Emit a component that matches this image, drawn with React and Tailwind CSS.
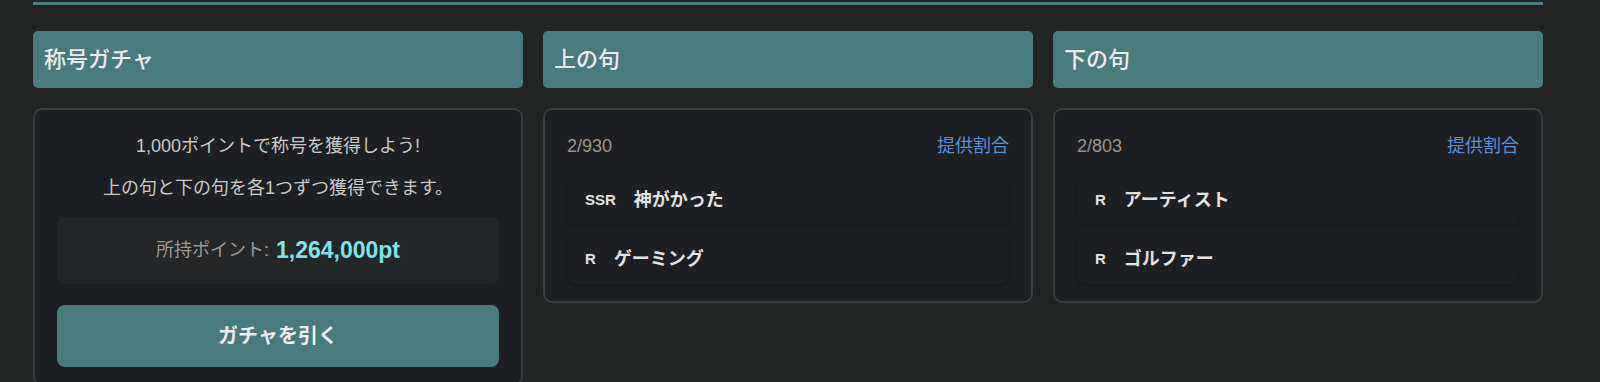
const font = "font-['Liberation_Sans','Noto_Sans_CJK_JP',sans-serif]";

function Header({ title }) {
  return (
    <div className="h-[57px] rounded-[5px] bg-[#497b7d] flex items-center px-[11px]">
      <h2 className="text-[22px] font-medium text-[#ececec]">{title}</h2>
    </div>
  );
}

function Card({ children }) {
  return (
    <div className="mt-5 rounded-[9px] border-2 border-[#3b3c3f] bg-[#1e1f22] px-[22px] pt-[23px] pb-[17px]">
      {children}
    </div>
  );
}

function PoolCard({ count, items }) {
  return (
    <Card>
      <div className="flex justify-between items-center text-[18px] leading-[27px]">
        <span className="text-[#9a958e]">{count}</span>
        <span className="text-[#5a8fd6]">提供割合</span>
      </div>
      <div className="mt-4 flex flex-col gap-[10px]">
        {items.map((it) => (
          <div
            key={it.name}
            className="h-[49px] flex items-center gap-[18px] pl-[18px] rounded-lg bg-[#1e1f22] shadow-[0_1px_3px_rgba(0,0,0,0.25)]"
          >
            <span className="text-[15px] font-bold text-[#e2e2e2]">{it.rank}</span>
            <span className="text-[18px] font-bold text-[#e2e2e2]">{it.name}</span>
          </div>
        ))}
      </div>
    </Card>
  );
}

export default function App() {
  return (
    <div className={`min-h-screen bg-[#222423] ${font}`}>
      <div className="ml-[33px] w-[1510px] pt-[2px]">
        <div className="h-[3px] bg-[#4a7e80]" />

        <div className="grid grid-cols-3 gap-5 mt-[26px]">
          <div>
            <Header title="称号ガチャ" />
            <Card>
              <p className="text-center text-[18px] leading-[27px] text-[#c9c9c9]">
                1,000ポイントで称号を獲得しよう!
              </p>
              <p className="mt-[15px] text-center text-[18px] leading-[27px] text-[#c9c9c9]">
                上の句と下の句を各1つずつ獲得できます。
              </p>
              <div className="mt-[15px] h-[67px] rounded-lg bg-[#252628] flex items-center justify-center">
                <span className="text-[18px] text-[#9b9b9b]">所持ポイント:</span>
                <span className="ml-[7px] text-[23px] font-bold text-[#7ee3ea]">1,264,000pt</span>
              </div>
              <button className="mt-[21px] w-full h-[62px] rounded-lg bg-[#497b7d] text-[20px] font-bold text-[#ececec]">
                ガチャを引く
              </button>
            </Card>
          </div>

          <div>
            <Header title="上の句" />
            <PoolCard
              count="2/930"
              items={[
                { rank: "SSR", name: "神がかった" },
                { rank: "R", name: "ゲーミング" },
              ]}
            />
          </div>

          <div>
            <Header title="下の句" />
            <PoolCard
              count="2/803"
              items={[
                { rank: "R", name: "アーティスト" },
                { rank: "R", name: "ゴルファー" },
              ]}
            />
          </div>
        </div>
      </div>
    </div>
  );
}
